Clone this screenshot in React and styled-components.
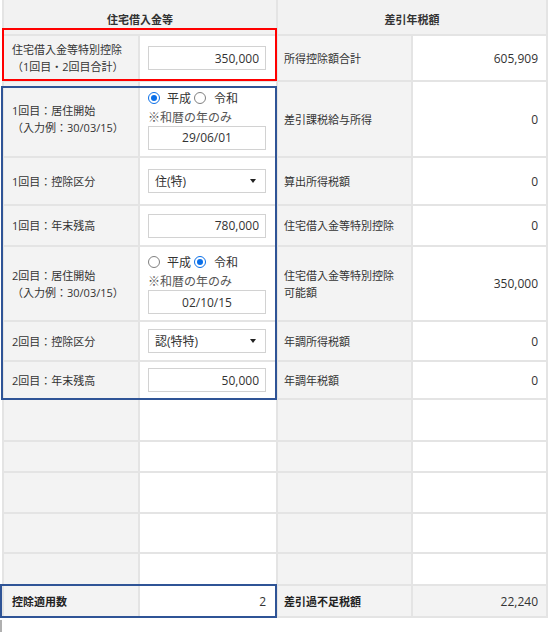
import React from 'react';
import styled, { createGlobalStyle } from 'styled-components';

const GlobalStyle = createGlobalStyle`
  body {
    margin: 0;
    background: #fff;
    font-family: "Open Sans", "Noto Sans CJK JP", sans-serif;
    color: #333;
  }
`;

// row track heights (cell content, the 2px grid gap draws the lines)
const ROWS = [34, 44, 74, 46, 39, 73, 38, 36, 40, 29, 39, 38, 30, 30];
const LINE = '#e4e4e4';
const LABEL_BG = '#f3f3f3';

const Page = styled.div`
  position: relative;
  padding-left: 2px;
  width: 546px;
`;

const Grid = styled.div`
  display: grid;
  grid-template-columns: 134px 136px 133px 133px;
  grid-template-rows: ${ROWS.map((r) => `${r}px`).join(' ')};
  gap: 2px;
  width: 542px;
  background: ${LINE};
  border: 2px solid ${LINE};
  border-top: none;
`;

const Head = styled.div`
  grid-column: span 2;
  display: flex;
  align-items: center;
  justify-content: center;
  padding-top: 3px;
  background: #f2f2f2;
  font-size: 11px;
  font-weight: bold;
  color: #333;
`;

const Label = styled.div`
  display: flex;
  align-items: center;
  padding-left: ${(p) => (p.$side === 'right' ? 6 : 8)}px;
  background: ${LABEL_BG};
  font-size: 11px;
  line-height: 17px;
  font-weight: ${(p) => (p.$bold ? 'bold' : 'normal')};
  color: ${(p) => (p.$bold ? '#222' : '#333')};
`;

const Value = styled.div`
  display: flex;
  align-items: center;
  justify-content: flex-end;
  padding-right: ${(p) => p.$pad || 8}px;
  background: ${(p) => (p.$gray ? LABEL_BG : '#fff')};
  font-size: 12px;
  color: #333;
`;

const Field = styled.div`
  display: flex;
  flex-direction: column;
  justify-content: center;
  padding-left: 8px;
  background: #fff;
`;

const TextBox = styled.input`
  box-sizing: border-box;
  width: 118px;
  height: 24px;
  margin: 0;
  padding: 0 6px;
  border: 1px solid #d2d2d2;
  border-radius: 0;
  background: #fff;
  font-family: "Open Sans", "Noto Sans CJK JP", sans-serif;
  font-size: 12px;
  color: #333;
  text-align: ${(p) => p.$align || 'right'};
  outline: none;
`;

const SelectBox = styled.div`
  box-sizing: border-box;
  width: 118px;
  height: 24px;
  display: flex;
  align-items: center;
  justify-content: space-between;
  padding: 0 9px 0 6px;
  border: 1px solid #d2d2d2;
  background: #fff;
  font-size: 12px;
  color: #333;
`;

const Caret = styled.span`
  width: 0;
  height: 0;
  border-left: 3px solid transparent;
  border-right: 3px solid transparent;
  border-top: 4px solid #222;
`;

const RadioRow = styled.div`
  display: flex;
  align-items: center;
  height: 18px;
  font-size: 12px;
`;

const Radio = styled.span`
  box-sizing: border-box;
  width: 12px;
  height: 12px;
  border-radius: 50%;
  border: ${(p) => (p.$checked ? '1.5px solid #0a6fe8' : '1px solid #808080')};
  background: #fff;
  display: flex;
  align-items: center;
  justify-content: center;
  margin-right: ${(p) => (p.$first ? 7 : 8)}px;
  margin-left: ${(p) => (p.$first ? 0 : 3)}px;

  &::after {
    content: '';
    width: 6px;
    height: 6px;
    border-radius: 50%;
    background: ${(p) => (p.$checked ? '#0a6fe8' : 'transparent')};
  }
`;

const Note = styled.div`
  height: 18px;
  margin-top: 1px;
  display: flex;
  align-items: center;
  font-size: 12px;
  color: #555;
`;

const Mark = styled.div`
  position: absolute;
  box-sizing: border-box;
  top: ${(p) => p.$top}px;
  left: ${(p) => p.$left}px;
  width: ${(p) => p.$width}px;
  height: ${(p) => p.$height}px;
  border: 2px solid ${(p) => p.$color};
  pointer-events: none;
`;

const Tick = styled.div`
  width: 2px;
  height: 12px;
  margin: 2px 0 0 -2px;
  background: #b0b0b0;
`;

const Era = ({ heisei, date }) => (
  <Field>
    <RadioRow>
      <Radio $first $checked={heisei} />
      <span>平成</span>
      <Radio $checked={!heisei} />
      <span>令和</span>
    </RadioRow>
    <Note>※和暦の年のみ</Note>
    <TextBox readOnly value={date} $align="center" />
  </Field>
);

const Amount = ({ value }) => (
  <Field>
    <TextBox readOnly value={value} />
  </Field>
);

const Kind = ({ value }) => (
  <Field>
    <SelectBox>
      <span>{value}</span>
      <Caret />
    </SelectBox>
  </Field>
);

const App = () => (
  <Page>
    <GlobalStyle />
    <Grid>
      <Head>住宅借入金等</Head>
      <Head>差引年税額</Head>

      <Label>住宅借入金等特別控除<br />（1回目・2回目合計）</Label>
      <Amount value="350,000" />
      <Label $side="right">所得控除額合計</Label>
      <Value>605,909</Value>

      <Label>1回目：居住開始<br />（入力例：30/03/15）</Label>
      <Era heisei date="29/06/01" />
      <Label $side="right">差引課税給与所得</Label>
      <Value>0</Value>

      <Label>1回目：控除区分</Label>
      <Kind value="住(特)" />
      <Label $side="right">算出所得税額</Label>
      <Value>0</Value>

      <Label>1回目：年末残高</Label>
      <Amount value="780,000" />
      <Label $side="right">住宅借入金等特別控除</Label>
      <Value>0</Value>

      <Label>2回目：居住開始<br />（入力例：30/03/15）</Label>
      <Era date="02/10/15" />
      <Label $side="right">住宅借入金等特別控除<br />可能額</Label>
      <Value>350,000</Value>

      <Label>2回目：控除区分</Label>
      <Kind value="認(特特)" />
      <Label $side="right">年調所得税額</Label>
      <Value>0</Value>

      <Label>2回目：年末残高</Label>
      <Amount value="50,000" />
      <Label $side="right">年調年税額</Label>
      <Value>0</Value>

      {[0, 1, 2, 3, 4].map((i) => (
        <React.Fragment key={i}>
          <Label />
          <Value />
          <Label $side="right" />
          <Value />
        </React.Fragment>
      ))}

      <Label $bold>控除適用数</Label>
      <Value $pad={10}>2</Value>
      <Label $side="right" $bold>差引過不足税額</Label>
      <Value $gray>22,240</Value>
    </Grid>
    <Tick />

    <Mark $color="#ff0000" $top={28} $left={2} $width={275} $height={53} />
    <Mark $color="#2f5496" $top={86} $left={1} $width={276} $height={314} />
    <Mark $color="#2f5496" $top={584} $left={0} $width={277} $height={34} />
  </Page>
);

export default App;
